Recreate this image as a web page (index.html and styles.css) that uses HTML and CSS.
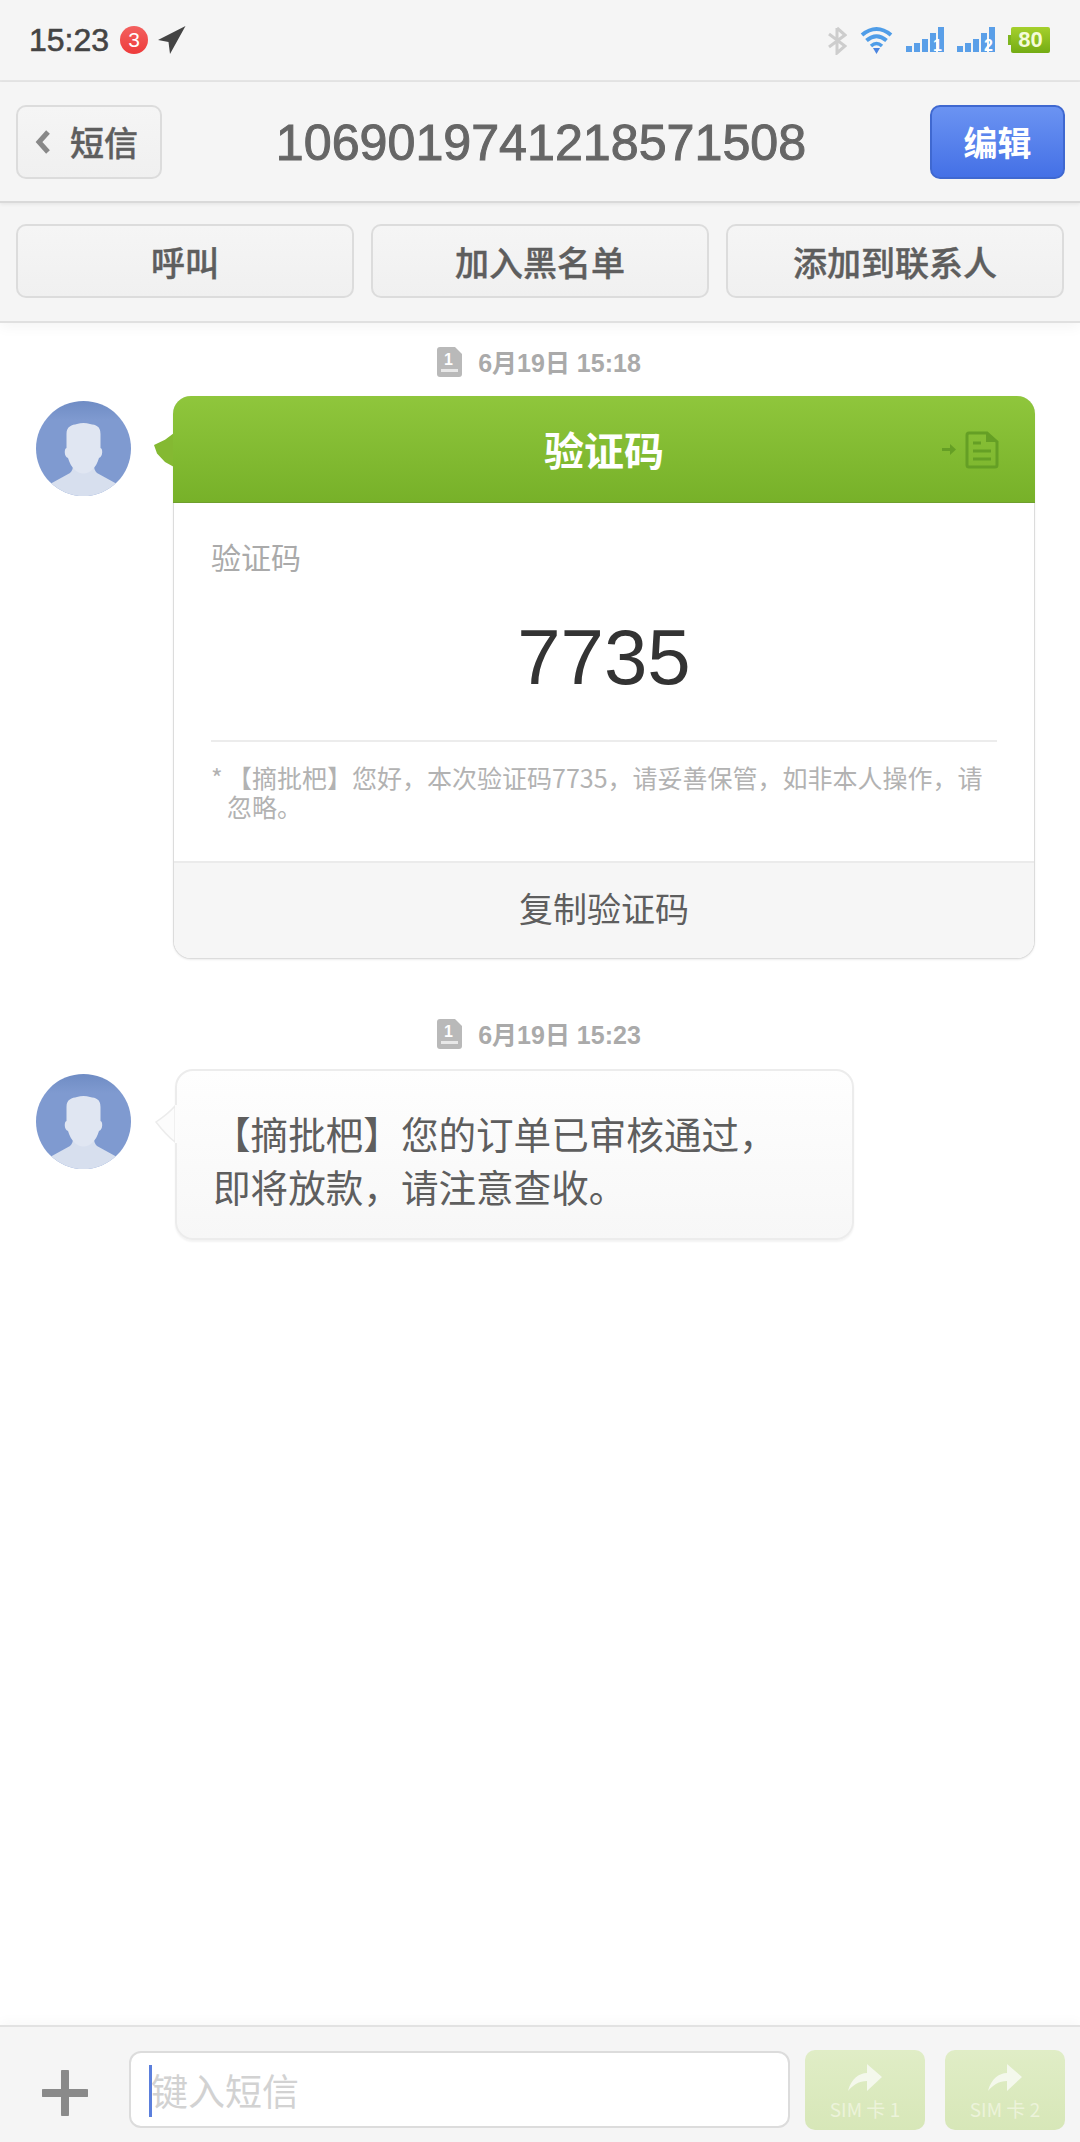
FILE: index.html
```html
<!DOCTYPE html>
<html lang="zh">
<head>
<meta charset="utf-8">
<title>短信</title>
<link rel="stylesheet" href="styles.css">
</head>
<body>
<div class="page">
  <header class="status">
    <div class="status-left">
      <span class="time">15:23</span>
      <span class="badge">3</span>
      <svg class="arrow" viewBox="0 0 28 28"><path d="M0 14 L27.500 0 L12 28 L10.500 16 Z" fill="#444"/></svg>
    </div>
    <div class="status-right">
      <svg class="bt" viewBox="0 0 20 29"><path d="M10 2 V27 L18 20 L2 8 M10 2 L18 9 L2 21" fill="none" stroke="#cdcdcd" stroke-width="3"/></svg>
      <svg class="wifi" viewBox="0 0 33 28"><path d="M2 9 Q16.500 -3 31 9" fill="none" stroke="#4f9de8" stroke-width="4"/><path d="M6.500 14.500 Q16.500 6 26.500 14.500" fill="none" stroke="#4f9de8" stroke-width="4"/><path d="M11 20 Q16.500 15 22 20" fill="none" stroke="#4f9de8" stroke-width="3.500"/><path d="M13 22 L20 22 L16.500 28 Z" fill="#4a84e0"/></svg>
      <svg class="signal" viewBox="0 0 39 26"><g fill="#5a9fe8"><rect x="0" y="19" width="6" height="6"/><rect x="8" y="16" width="6" height="9"/><rect x="16" y="12" width="6" height="13"/><rect x="24" y="6" width="6" height="19"/><rect x="32" y="0" width="6" height="25"/></g><text x="27" y="24" class="sig-num">1</text></svg>
      <svg class="signal" viewBox="0 0 39 26"><g fill="#5a9fe8"><rect x="0" y="19" width="6" height="6"/><rect x="8" y="16" width="6" height="9"/><rect x="16" y="12" width="6" height="13"/><rect x="24" y="6" width="6" height="19"/><rect x="32" y="0" width="6" height="25"/></g><text x="27" y="24" class="sig-num">2</text></svg>
      <span class="battery"><span class="battery-cap"></span><span class="battery-body">80</span></span>
    </div>
  </header>

  <nav class="topbar">
    <a class="btn back">
      <svg class="chev" viewBox="0 0 16 26"><path d="M13 3 L4 13 L13 23" fill="none" stroke="#888" stroke-width="5"/></svg>
      <span>短信</span>
    </a>
    <h1 class="title">1069019741218571508</h1>
    <a class="btn edit">编辑</a>
  </nav>

  <div class="actions">
    <a class="btn action">呼叫</a>
    <a class="btn action">加入黑名单</a>
    <a class="btn action">添加到联系人</a>
  </div>

  <main class="thread">
    <div class="date">
      <svg class="sim" viewBox="0 0 25 30"><path d="M0 3 a3 3 0 0 1 3 -3 H18 L25 7 V27 a3 3 0 0 1 -3 3 H3 a3 3 0 0 1 -3 -3 Z" fill="#b9b9b9"/><rect x="4" y="22" width="17" height="3" fill="#e8e8e8"/><text x="11.500" y="18" class="sim-num">1</text></svg>
      <span>6月19日 15:18</span>
    </div>
    <div class="row row-card">
      <svg class="avatar" viewBox="0 0 95 95"><use href="#person"/></svg>
      <article class="card">
        <span class="tail-green"></span>
        <div class="card-head">
          <span>验证码</span>
          <svg class="doc" viewBox="0 0 58 38"><path d="M1 17 H9 V13 L15 18.500 L9 24 V20 H1 Z" fill="#659f25"/><path d="M28 2 H46 L56 11 V34 a2 2 0 0 1 -2 2 H28 a2 2 0 0 1 -2 -2 V4 a2 2 0 0 1 2 -2 Z" fill="none" stroke="#659f25" stroke-width="3"/><path d="M45 2 L56 11 H45 Z" fill="#659f25"/><path d="M32 12 H40 M32 20 H50 M32 28 H50" stroke="#659f25" stroke-width="3"/></svg>
        </div>
        <div class="card-body">
          <div class="card-label">验证码</div>
          <div class="card-code">7735</div>
          <p class="card-note">【摘批杷】您好，本次验证码7735，请妥善保管，如非本人操作，请忽略。</p>
        </div>
        <div class="card-foot">复制验证码</div>
      </article>
    </div>
    <div class="date date-second">
      <svg class="sim" viewBox="0 0 25 30"><path d="M0 3 a3 3 0 0 1 3 -3 H18 L25 7 V27 a3 3 0 0 1 -3 3 H3 a3 3 0 0 1 -3 -3 Z" fill="#b9b9b9"/><rect x="4" y="22" width="17" height="3" fill="#e8e8e8"/><text x="11.500" y="18" class="sim-num">1</text></svg>
      <span>6月19日 15:23</span>
    </div>
    <div class="row row-bubble">
      <svg class="avatar" viewBox="0 0 95 95"><use href="#person"/></svg>
      <div class="bubble">
        <svg class="tail-grey" viewBox="0 0 23 38"><path d="M21 1 Q14 9 2 17 Q12 30 21 37 Z" fill="#fcfcfc" stroke="#ececec" stroke-width="1.500"/><rect x="21" y="0" width="2" height="38" fill="#fcfcfc"/></svg>
        <p>【摘批杷】您的订单已审核通过，<br>即将放款，请注意查收。</p>
      </div>
    </div>
  </main>

  <footer class="composer">
    <svg class="plus" viewBox="0 0 46 46"><path d="M23 2 V44 M2 23 H44" stroke="#8a8a8a" stroke-width="8" stroke-linecap="round"/></svg>
    <div class="input"><span class="caret"></span><span class="placeholder">键入短信</span></div>
    <a class="send"><svg viewBox="0 0 36 28"><path d="M1 27 C4 15 12 9 20 9 V0 L35 13 L20 27 V17 C12 17 6 21 1 27 Z" fill="#f4f8ec"/></svg><span>SIM 卡 1</span></a>
    <a class="send"><svg viewBox="0 0 36 28"><path d="M1 27 C4 15 12 9 20 9 V0 L35 13 L20 27 V17 C12 17 6 21 1 27 Z" fill="#f4f8ec"/></svg><span>SIM 卡 2</span></a>
  </footer>
</div>
<svg class="defs" width="0" height="0">
  <defs>
    <linearGradient id="face" x1="0" y1="0" x2="0" y2="1"><stop offset="0" stop-color="#6f8cc4"/><stop offset="0.2" stop-color="#7f9ad0"/><stop offset="1" stop-color="#7f9ad0"/></linearGradient>
    <clipPath id="round"><circle cx="47.500" cy="47.500" r="47.500"/></clipPath>
    <g id="person">
      <g clip-path="url(#round)">
        <rect width="95" height="95" fill="url(#face)"/>
        <path d="M14 83 L34 72 C36 70 37 68 37 64 H58 C58 68 59 70 61 72 L81 83 V95 H14 Z" fill="#d7dfee"/>
        <path d="M30.500 33 C30.500 25 36 24 41 23 C45 21.500 50 21.500 54 23 C60 24 64.500 25 64.500 33 V47 C67 47 67 56 63 57 C60 67 54 72.500 47.500 72.500 C41 72.500 35 67 32 57 C28 56 28 47 30.500 47 Z" fill="#e0e6f2"/>
      </g>
    </g>
  </defs>
</svg>
</body>
</html>
```

FILE: styles.css
```css
* { box-sizing: border-box; }
html, body { margin: 0; padding: 0; }
body { background: #fff; font-family: "Liberation Sans", "Noto Sans CJK SC", sans-serif; }
a { display: block; }
p, h1 { margin: 0; }
.defs { position: absolute; }

.page { width: 1080px; height: 2142px; display: flex; flex-direction: column; overflow: hidden; }

/* status bar */
.status { height: 82px; flex: none; background: #f5f5f5; border-bottom: 2px solid #e6e6e6; display: flex; justify-content: space-between; align-items: center; padding: 0 30px 0 29px; }
.status-left { display: flex; align-items: center; }
.time { font-size: 32px; font-weight: 400; color: #444; -webkit-text-stroke: 0.6px #444; width: 91px; }
.badge { width: 28px; height: 28px; border-radius: 50%; background: linear-gradient(#f3615f, #ee3b3b); color: #fff; font-size: 21px; line-height: 28px; text-align: center; }
.arrow { width: 28px; height: 28px; margin-left: 10px; }
.status-right { display: flex; align-items: center; }
.bt { width: 20px; height: 29px; }
.wifi { width: 33px; height: 28px; margin-left: 13px; }
.signal { width: 39px; height: 26px; margin-left: 13px; }
.signal + .signal { margin-left: 12px; }
.sig-num { font-size: 16px; font-weight: 700; fill: #fff; font-family: "Liberation Sans", sans-serif; }
.battery { display: flex; align-items: center; margin-left: 12px; }
.battery-cap { width: 3px; height: 10px; background: #7eb51f; }
.battery-body { width: 39px; height: 26px; border-radius: 2px; background: linear-gradient(#a5d02c, #74ac14); color: #f4fbd8; font-size: 22px; font-weight: 700; line-height: 26px; text-align: center; }

/* shared button */
.btn { height: 74px; border: 2px solid #dcdcdc; border-radius: 10px; background: linear-gradient(#f5f5f5, #f0f0f0); color: #5e5e5e; font-size: 34px; font-weight: 500; -webkit-text-stroke: 0.4px #5e5e5e; display: flex; align-items: center; justify-content: center; font-family: "Noto Sans CJK SC", sans-serif; }

/* top bar */
.topbar { height: 121px; flex: none; background: #f5f5f5; border-bottom: 2px solid #d9d9d9; display: flex; align-items: center; justify-content: space-between; padding: 0 15px 0 16px; position: relative; box-shadow: 0 1px 4px rgba(0, 0, 0, 0.08); z-index: 2; }
.back { width: 146px; gap: 19px; justify-content: flex-start; padding-left: 17px; }
.chev { width: 16px; height: 26px; }
.title { font-size: 50.200px; font-weight: 400; color: #666; -webkit-text-stroke: 1px #666; margin-right: 10px; padding-top: 2px; }
.edit { width: 135px; border-color: #3f68d0; background: linear-gradient(#6b93f2, #4470e6); color: #fff; font-weight: 700; -webkit-text-stroke: 0; }

/* action bar */
.actions { height: 120px; flex: none; background: #f5f5f5; border-bottom: 2px solid #e0e0e0; padding: 21px 16px 0; display: grid; grid-template-columns: repeat(3, 338px); column-gap: 17px; position: relative; box-shadow: 0 3px 14px rgba(0, 0, 0, 0.05); z-index: 1; }
.action { height: 74px; }

/* thread */
.thread { flex: 1; min-height: 0; display: flex; flex-direction: column; background: #fff; padding-top: 24px; }
.date { display: flex; align-items: center; justify-content: center; height: 30px; gap: 16px; padding-right: 2px; color: #aaa; font-size: 25px; font-weight: 700; }
.date span { margin-top: -3px; }
.sim { width: 25px; height: 30px; }
.sim-num { font-size: 16px; font-weight: 700; fill: #fff; text-anchor: middle; font-family: "Liberation Sans", sans-serif; }
.date-second { margin-top: 60px; }

.row { display: flex; align-items: flex-start; padding-left: 36px; }
.avatar { width: 95px; height: 95px; flex: none; }
.row-card { margin-top: 19px; }
.row-card .avatar { margin-top: 5px; }
.row-bubble { margin-top: 20px; }
.row-bubble .avatar { margin-top: 5px; }

/* card */
.card { width: 862px; margin-left: 42px; position: relative; border-radius: 18px; border: 1px solid #dcdcdc; border-top: 0; background: #fff; box-shadow: 0 1px 2px rgba(0, 0, 0, 0.08); }
.tail-green { position: absolute; display: block; left: -20px; top: 37px; width: 20px; height: 34px; background: #84b932; clip-path: polygon(100% 0, 55% 20%, 0 35%, 15% 60%, 55% 85%, 100% 100%); }
.card-head { height: 107px; margin: 0 -1px; background: linear-gradient(#8fc63c, #77b129); border-radius: 18px 18px 0 0; border-bottom: 1px solid #6f9f2d; color: #fff; font-size: 40px; font-weight: 700; font-family: "Noto Sans CJK SC", sans-serif; display: flex; align-items: center; justify-content: center; position: relative; }
.doc { position: absolute; right: 36px; top: 35px; width: 58px; height: 38px; }
.card-body { padding: 33px 37px 0; height: 358px; }
.card-label { font-size: 30px; line-height: 40px; color: #aaa; font-family: "Noto Sans CJK SC", sans-serif; }
.card-code { height: 166px; padding-top: 27px; font-size: 78px; line-height: 108px; color: #333; text-align: center; border-bottom: 2px solid #ececec; }
.card-note { margin-top: 21px; padding-left: 16px; font-size: 25px; line-height: 29px; color: #b2b2b2; position: relative; font-family: "Noto Sans CJK SC", sans-serif; }
.card-note::before { content: "*"; position: absolute; left: 0; top: 0; }
.card-foot { height: 97px; background: #f6f6f6; border-top: 2px solid #ebebeb; border-radius: 0 0 17px 17px; color: #5e5e5e; font-size: 34px; text-align: center; line-height: 90px; font-family: "Noto Sans CJK SC", sans-serif; }

/* bubble */
.bubble { width: 679px; height: 171px; margin-left: 44px; position: relative; border-radius: 18px; border: 2px solid #ececec; background: linear-gradient(#fefefe, #f7f7f7); box-shadow: 0 2px 2px rgba(0, 0, 0, 0.05); padding: 35px 0 0 36px; color: #5e5e5e; font-size: 37.600px; line-height: 53px; font-family: "Noto Sans CJK SC", sans-serif; }
.tail-grey { position: absolute; left: -23px; top: 34px; width: 23px; height: 38px; }

/* composer */
.composer { height: 117px; flex: none; background: #f5f5f5; border-top: 2px solid #e2e2e2; display: flex; align-items: center; padding: 10px 15px 0 42px; position: relative; box-shadow: 0 -3px 12px rgba(0, 0, 0, 0.03); }
.plus { width: 46px; height: 46px; flex: none; margin-top: 6px; }
.input { width: 661px; height: 77px; margin-left: 41px; border: 2px solid #dcdcdc; border-radius: 12px; background: #fff; position: relative; display: flex; align-items: center; padding-left: 20px; color: #d2d2d2; font-size: 37px; font-family: "Noto Sans CJK SC", sans-serif; }
.caret { position: absolute; left: 18px; top: 12px; width: 3px; height: 52px; background: #5b7fdc; }
.send { width: 120px; height: 80px; flex: none; margin-left: 15px; border-radius: 10px; background: linear-gradient(#e0edc6, #d7e7b8); display: flex; flex-direction: column; align-items: center; padding-top: 14px; color: #ecf3da; font-size: 19px; line-height: 22px; font-family: "Noto Sans CJK SC", sans-serif; }
.send + .send { margin-left: 20px; }
.send svg { width: 36px; height: 28px; margin-bottom: 6px; }
```
